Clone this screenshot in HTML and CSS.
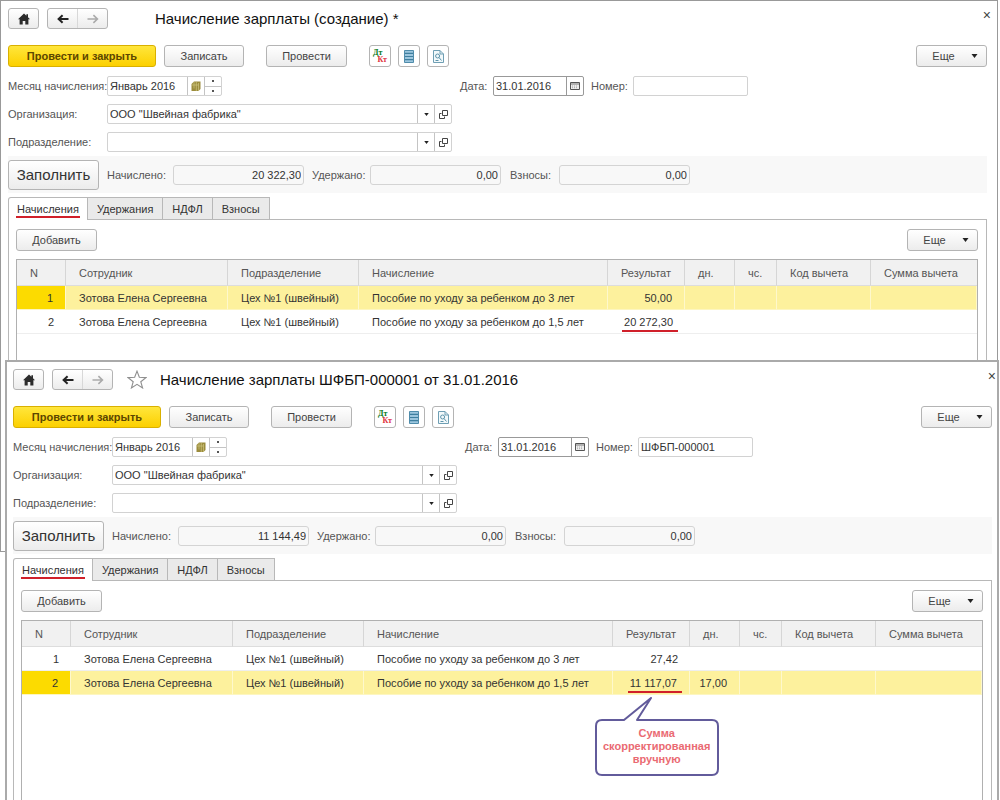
FILE: index.html
```html
<!DOCTYPE html>
<html lang="ru">
<head>
<meta charset="utf-8">
<title>Начисление зарплаты</title>
<link rel="stylesheet" href="styles.css">
</head>
<body>
<svg class="sprite" aria-hidden="true">
  <symbol id="i-home" viewBox="0 0 14 12"><path d="M7 0.5 1 6.2h1.6V11.5h3.1V8h2.6v3.5h3.1V6.2H13L11 4.3V1.2H9.4v1.6z" fill="#2b2b2b"/></symbol>
  <symbol id="i-back" viewBox="0 0 12 10"><path d="M11.5 5H2M5.6 1.2 1.6 5l4 3.8" fill="none" stroke="currentColor" stroke-width="2"/></symbol>
  <symbol id="i-fwd" viewBox="0 0 12 10"><path d="M0.5 5H10M6.4 1.2l4 3.8-4 3.8" fill="none" stroke="currentColor" stroke-width="1.6"/></symbol>
  <symbol id="i-star" viewBox="0 0 18 17"><path d="M9 1l2.1 5.5 5.9.3-4.6 3.7 1.6 5.6L9 12.9l-5 3.2 1.6-5.6L1 6.8l5.9-.3z" fill="#fff" stroke="#8f8f8f"/></symbol>
  <symbol id="i-list" viewBox="0 0 10 13"><path d="M0.5 0.5h9v12h-9z" fill="#9cc6de" stroke="#4f8cab"/><path d="M1 3.3h8M1 6.5h8M1 9.7h8" stroke="#3f7f9f" stroke-width="1.2"/></symbol>
  <symbol id="i-doc" viewBox="0 0 11 13"><path d="M0.5 0.5h6.500l3.500 3.500v8.500h-10z" fill="#f2f9fb" stroke="#6f9fb4"/><path d="M7 0.500V4h3.500" fill="none" stroke="#6f9fb4"/><circle cx="4.600" cy="6" r="2" fill="none" stroke="#5c93aa"/><path d="M6 7.500l2.500 3M2.500 10.500h3" stroke="#5c93aa"/></symbol>
  <symbol id="i-month" viewBox="0 0 10 11"><path d="M3 0.500h6.500v7.500L7.500 10H0.500V3z" fill="#9b8c3c"/><path d="M3 1v6.500M5.300 1v9M7.500 2v8M1 4h6.500" stroke="#cfc583" stroke-width=".7"/></symbol>
  <symbol id="i-cal" viewBox="0 0 10 8"><path d="M0.500 0.500h9v7h-9z" fill="#eee" stroke="#555"/><path d="M1 2h8" stroke="#777"/><path d="M2 4h6M2 5.700h6" stroke="#aaa" stroke-dasharray="1 1"/></symbol>
  <symbol id="i-open" viewBox="0 0 9 9"><path d="M3.500 0.500h5v5h-5z" fill="none" stroke="#444"/><path d="M2.500 3.500h-2v5h5v-2" fill="none" stroke="#444"/></symbol>
  <symbol id="i-down" viewBox="0 0 6 4"><path d="M0 0h6L3 4z" fill="#222"/></symbol>
</svg>

<main class="desktop">
  <section class="window window-new" aria-label="Начисление зарплаты (создание)">
    <header class="titlebar">
      <button class="btn home" aria-label="Домой"><svg width="14" height="12"><use href="#i-home"/></svg></button>
      <div class="nav">
        <button aria-label="Назад"><svg width="12" height="10"><use href="#i-back"/></svg></button>
        <button class="dim" aria-label="Вперед"><svg width="12" height="10"><use href="#i-fwd"/></svg></button>
      </div>
      <div class="favorite"></div>
      <h1>Начисление зарплаты (создание) *</h1>
      <button class="close" aria-label="Закрыть">×</button>
    </header>
    <div class="body">
      <div class="toolbar">
        <button class="btn primary">Провести и закрыть</button>
        <button class="btn write">Записать</button>
        <button class="btn post">Провести</button>
        <div class="icons">
          <button class="btn icon dtkt" aria-label="Дт Кт"><span class="dt">Дт</span><span class="kt">Кт</span></button>
          <button class="btn icon" aria-label="Список"><svg width="10" height="13"><use href="#i-list"/></svg></button>
          <button class="btn icon" aria-label="Отчет"><svg width="11" height="13"><use href="#i-doc"/></svg></button>
        </div>
        <button class="btn more">Еще<svg width="7" height="4"><use href="#i-down"/></svg></button>
      </div>
      <div class="form">
        <div class="row">
          <label class="name" for="month1">Месяц начисления:</label>
          <div class="slot">
            <div class="combo month"><input id="month1" value="Январь 2016"><button aria-label="Выбрать месяц"><svg width="10" height="11"><use href="#i-month"/></svg></button><div class="spin"><button aria-label="Больше"></button><button aria-label="Меньше"></button></div></div>
          </div>
          <label class="date-name" for="date1">Дата:</label>
          <div class="combo date"><input id="date1" value="31.01.2016"><button aria-label="Календарь"><svg width="10" height="8"><use href="#i-cal"/></svg></button></div>
          <label class="num-name" for="num1">Номер:</label>
          <div class="combo num"><input id="num1" value=""></div>
        </div>
        <div class="row">
          <label class="name" for="org1">Организация:</label>
          <div class="slot combo"><input id="org1" value="ООО &quot;Швейная фабрика&quot;"><button aria-label="Список"><svg width="5" height="3"><use href="#i-down"/></svg></button><button aria-label="Открыть"><svg width="9" height="9"><use href="#i-open"/></svg></button></div>
        </div>
        <div class="row">
          <label class="name" for="dep1">Подразделение:</label>
          <div class="slot combo"><input id="dep1" value=""><button aria-label="Список"><svg width="5" height="3"><use href="#i-down"/></svg></button><button aria-label="Открыть"><svg width="9" height="9"><use href="#i-open"/></svg></button></div>
        </div>
      </div>
      <div class="totals">
        <button class="btn fill">Заполнить</button>
        <label class="t1" for="acc1">Начислено:</label><input id="acc1" value="20 322,30" readonly>
        <label class="t2" for="ded1">Удержано:</label><input id="ded1" value="0,00" readonly>
        <label class="t3" for="con1">Взносы:</label><input id="con1" value="0,00" readonly>
      </div>
      <div class="tabs" role="tablist">
        <button class="tab active" role="tab" aria-selected="true">Начисления</button>
        <button class="tab" role="tab">Удержания</button>
        <button class="tab" role="tab">НДФЛ</button>
        <button class="tab" role="tab">Взносы</button>
      </div>
      <div class="panel">
        <div class="panel-bar"><button class="btn add">Добавить</button><button class="btn more">Еще<svg width="7" height="4"><use href="#i-down"/></svg></button></div>
        <div class="grid">
          <table>
            <colgroup><col class="c-n"><col class="c-emp"><col class="c-dep"><col class="c-acc"><col class="c-res"><col class="c-days"><col class="c-hrs"><col class="c-code"><col></colgroup>
            <thead><tr><th>N</th><th>Сотрудник</th><th>Подразделение</th><th>Начисление</th><th>Результат</th><th>дн.</th><th>чс.</th><th>Код вычета</th><th>Сумма вычета</th></tr></thead>
            <tbody>
              <tr class="selected"><td class="r">1</td><td>Зотова Елена Сергеевна</td><td>Цех №1 (швейный)</td><td>Пособие по уходу за ребенком до 3 лет</td><td class="r">50,00</td><td></td><td></td><td></td><td></td></tr>
              <tr><td class="r">2</td><td>Зотова Елена Сергеевна</td><td>Цех №1 (швейный)</td><td>Пособие по уходу за ребенком до 1,5 лет</td><td class="r"><span class="mark">20 272,30</span></td><td></td><td></td><td></td><td></td></tr>
            </tbody>
          </table>
        </div>
      </div>
    </div>
  </section>

  <section class="window window-saved" aria-label="Начисление зарплаты ШФБП-000001">
    <header class="titlebar">
      <button class="btn home" aria-label="Домой"><svg width="14" height="12"><use href="#i-home"/></svg></button>
      <div class="nav">
        <button aria-label="Назад"><svg width="12" height="10"><use href="#i-back"/></svg></button>
        <button class="dim" aria-label="Вперед"><svg width="12" height="10"><use href="#i-fwd"/></svg></button>
      </div>
      <div class="favorite"><button aria-label="В избранное"><svg width="20" height="19"><use href="#i-star"/></svg></button></div>
      <h1>Начисление зарплаты ШФБП-000001 от 31.01.2016</h1>
      <button class="close" aria-label="Закрыть">×</button>
    </header>
    <div class="body">
      <div class="toolbar">
        <button class="btn primary">Провести и закрыть</button>
        <button class="btn write">Записать</button>
        <button class="btn post">Провести</button>
        <div class="icons">
          <button class="btn icon dtkt" aria-label="Дт Кт"><span class="dt">Дт</span><span class="kt">Кт</span></button>
          <button class="btn icon" aria-label="Список"><svg width="10" height="13"><use href="#i-list"/></svg></button>
          <button class="btn icon" aria-label="Отчет"><svg width="11" height="13"><use href="#i-doc"/></svg></button>
        </div>
        <button class="btn more">Еще<svg width="7" height="4"><use href="#i-down"/></svg></button>
      </div>
      <div class="form">
        <div class="row">
          <label class="name" for="month2">Месяц начисления:</label>
          <div class="slot">
            <div class="combo month"><input id="month2" value="Январь 2016"><button aria-label="Выбрать месяц"><svg width="10" height="11"><use href="#i-month"/></svg></button><div class="spin"><button aria-label="Больше"></button><button aria-label="Меньше"></button></div></div>
          </div>
          <label class="date-name" for="date2">Дата:</label>
          <div class="combo date"><input id="date2" value="31.01.2016"><button aria-label="Календарь"><svg width="10" height="8"><use href="#i-cal"/></svg></button></div>
          <label class="num-name" for="num2">Номер:</label>
          <div class="combo num"><input id="num2" value="ШФБП-000001"></div>
        </div>
        <div class="row">
          <label class="name" for="org2">Организация:</label>
          <div class="slot combo"><input id="org2" value="ООО &quot;Швейная фабрика&quot;"><button aria-label="Список"><svg width="5" height="3"><use href="#i-down"/></svg></button><button aria-label="Открыть"><svg width="9" height="9"><use href="#i-open"/></svg></button></div>
        </div>
        <div class="row">
          <label class="name" for="dep2">Подразделение:</label>
          <div class="slot combo"><input id="dep2" value=""><button aria-label="Список"><svg width="5" height="3"><use href="#i-down"/></svg></button><button aria-label="Открыть"><svg width="9" height="9"><use href="#i-open"/></svg></button></div>
        </div>
      </div>
      <div class="totals">
        <button class="btn fill">Заполнить</button>
        <label class="t1" for="acc2">Начислено:</label><input id="acc2" value="11 144,49" readonly>
        <label class="t2" for="ded2">Удержано:</label><input id="ded2" value="0,00" readonly>
        <label class="t3" for="con2">Взносы:</label><input id="con2" value="0,00" readonly>
      </div>
      <div class="tabs" role="tablist">
        <button class="tab active" role="tab" aria-selected="true">Начисления</button>
        <button class="tab" role="tab">Удержания</button>
        <button class="tab" role="tab">НДФЛ</button>
        <button class="tab" role="tab">Взносы</button>
      </div>
      <div class="panel">
        <div class="panel-bar"><button class="btn add">Добавить</button><button class="btn more">Еще<svg width="7" height="4"><use href="#i-down"/></svg></button></div>
        <div class="grid">
          <table>
            <colgroup><col class="c-n"><col class="c-emp"><col class="c-dep"><col class="c-acc"><col class="c-res"><col class="c-days"><col class="c-hrs"><col class="c-code"><col></colgroup>
            <thead><tr><th>N</th><th>Сотрудник</th><th>Подразделение</th><th>Начисление</th><th>Результат</th><th>дн.</th><th>чс.</th><th>Код вычета</th><th>Сумма вычета</th></tr></thead>
            <tbody>
              <tr><td class="r">1</td><td>Зотова Елена Сергеевна</td><td>Цех №1 (швейный)</td><td>Пособие по уходу за ребенком до 3 лет</td><td class="r">27,42</td><td></td><td></td><td></td><td></td></tr>
              <tr class="selected"><td class="r">2</td><td>Зотова Елена Сергеевна</td><td>Цех №1 (швейный)</td><td>Пособие по уходу за ребенком до 1,5 лет</td><td class="r"><span class="mark">11 117,07<span class="callout"><svg viewBox="0 0 124 80" width="124" height="80"><path d="M7 23H29L56 1 42 23H117q6 0 6 6V72q0 6-6 6H7q-6 0-6-6V29q0-6 6-6z" fill="#fff" stroke="#625b9b" stroke-width="2" stroke-linejoin="round"/></svg><span class="callout-text">Сумма скорректированная вручную</span></span></span></td><td class="r">17,00</td><td></td><td></td><td></td></tr>
            </tbody>
          </table>
        </div>
      </div>
    </div>
  </section>
</main>
</body>
</html>
```
FILE: styles.css
```css
* { box-sizing: border-box; }
body {
  margin: 0;
  background: #fff;
  color: #444;
  font: 11px/16px "Liberation Sans", Arial, sans-serif;
}
button, input { font: inherit; color: inherit; margin: 0; padding: 0; border: 0; background: none; }
svg { display: block; flex: none; }
.sprite { position: absolute; width: 0; height: 0; }

.desktop { position: relative; height: 100vh; overflow: hidden; }
.window {
  position: absolute;
  display: flex;
  flex-direction: column;
  background: #fff;
  border: 1px solid #999;
}
.window-new { left: 0; right: 2px; top: 0; bottom: 31%; padding: 7px 10px 0 7px; }
.window-saved { left: 5px; right: 1px; top: 360px; bottom: 0; padding: 7px 5px 0 6px; border: 2px solid #aaa; border-bottom: 0; }

.btn {
  display: flex;
  align-items: center;
  justify-content: center;
  height: 22px;
  border: 1px solid #b4b4b4;
  border-radius: 3px;
  background: linear-gradient(#fff, #ececec);
  white-space: nowrap;
}

.titlebar { display: flex; align-items: center; height: 21px; }
.home { width: 31px; height: 21px; }
.nav {
  display: flex;
  width: 61px;
  height: 21px;
  margin-left: 8px;
  border: 1px solid #b4b4b4;
  border-radius: 3px;
  background: linear-gradient(#fff, #ececec);
}
.nav button { flex: 1; display: flex; align-items: center; justify-content: center; color: #222; }
.nav .dim { color: #aaa; border-left: 1px solid #d8d8d8; }
.favorite { width: 47px; display: flex; justify-content: center; }
h1 { flex: 1; margin: 0; font-size: 15px; line-height: 20px; font-weight: 400; color: #111; }
.close { align-self: flex-start; height: 14px; margin-right: -4px; font-size: 14px; line-height: 14px; color: #444; }

.body { flex: 1; display: flex; flex-direction: column; min-height: 0; padding-top: 16px; }
.toolbar { display: flex; }
.primary { width: 148px; border-color: #d9b000; background: linear-gradient(#ffe63c, #fcd000); font-weight: 700; color: #5c4600; }
.write { width: 80px; margin-left: 8px; }
.post { width: 81px; margin-left: 22px; }
.icons { display: flex; gap: 7px; margin-left: 22px; }
.icon { width: 22px; background: #fff; }
.dtkt { flex-direction: column; font: 700 8px/7px "Liberation Serif", serif; }
.dt { color: #087a1c; align-self: flex-start; padding-left: 3px; }
.kt { color: #e0303c; align-self: flex-end; padding-right: 3px; }
.more { width: 71px; margin-left: auto; gap: 16px; padding-left: 7px; }

.form { display: flex; flex-direction: column; gap: 8px; padding-top: 9px; }
.row { display: flex; align-items: center; }
.row label { color: #555; white-space: nowrap; }
.name { width: 99px; }
.slot { width: 345px; }
.combo { display: flex; height: 20px; border: 1px solid #d2d2d2; border-radius: 2px; background: #fff; }
.combo input { flex: 1; min-width: 0; padding-left: 2px; color: #333; }
.combo > button { width: 17px; display: flex; align-items: center; justify-content: center; border-left: 1px solid #c4c4c4; }
.month { width: 115px; }
.spin { width: 17px; display: flex; flex-direction: column; border-left: 1px solid #c4c4c4; }
.spin button { flex: 1; display: flex; align-items: center; justify-content: center; }
.spin button + button { border-top: 1px solid #c4c4c4; }
.spin button::before { content: ""; width: 2px; height: 2px; background: #555; }
.date-name { margin-left: 8px; width: 33px; }
.date { width: 91px; border-color: #999; }
.date > button { border-color: #999; }
.num-name { margin-left: 7px; width: 42px; }
.num { width: 115px; }

.totals { display: flex; align-items: center; margin-top: 4px; height: 37px; background: #f8f8f8; }
.totals .fill { width: 91px; height: 30px; font-size: 15px; color: #333; }
.totals label { color: #555; white-space: nowrap; }
.totals input { width: 131px; height: 20px; padding-right: 2px; border: 1px solid #d4d4d4; border-radius: 3px; text-align: right; color: #333; }
.t1 { margin-left: 8px; width: 66px; }
.t2 { margin-left: 8px; width: 58px; }
.t3 { margin-left: 9px; width: 49px; }

.tabs { display: flex; margin-top: 4px; height: 22px; position: relative; }
.tab { padding: 0 9px; border: 1px solid #b8b8b8; border-left: 0; border-bottom: 0; background: #eaeaea; color: #333; }
.tab.active {
  position: relative;
  padding: 0 8px;
  border-left: 1px solid #b8b8b8;
  border-radius: 3px 0 0 0;
  margin-bottom: -1px;
  background: #fff;
}
.tab.active::after { content: ""; position: absolute; left: 7px; right: 7px; bottom: 2px; height: 2px; background: #d0202a; }

.panel { flex: 1; min-height: 0; display: flex; flex-direction: column; padding: 9px 8px 0 7px; border: 1px solid #b8b8b8; border-bottom: 0; }
.panel-bar { display: flex; }
.add { width: 81px; }
.grid { flex: 1; min-height: 0; margin-top: 8px; border: 1px solid #b0b0b0; border-bottom: 0; }

table { width: 100%; table-layout: fixed; border-collapse: separate; border-spacing: 0; }
.c-n { width: 49px; }
.c-emp { width: 162px; }
.c-dep { width: 131px; }
.c-acc { width: 249px; }
.c-res { width: 77px; }
.c-days { width: 50px; }
.c-hrs { width: 42px; }
.c-code { width: 94px; }
th, td { padding: 0 0 0 13px; text-align: left; white-space: nowrap; font-weight: 400; }
th { height: 26px; background: #f1f1f1; color: #555; border-right: 1px solid #d6d6d6; border-bottom: 1px solid #ddd; }
th:last-child { border-right: 0; }
td { height: 24px; color: #333; border-bottom: 1px solid #eee; }
td.r { text-align: right; padding: 0 12px 0 0; }
.selected td { background: #fdf19d; border-right: 1px solid #fef8cc; border-bottom-color: #fdf6c0; }
.selected td:first-child { background: #fcdb00; }

.mark { position: relative; display: inline-block; }
.mark::after { content: ""; position: absolute; left: -2px; right: -5px; bottom: -2px; height: 2px; background: #d0202a; }
.callout { position: absolute; left: -35px; top: 22px; width: 124px; }
.callout-text {
  position: absolute;
  left: 0;
  right: 0;
  top: 30px;
  font-weight: 700;
  line-height: 13px;
  text-align: center;
  white-space: normal;
  color: #ea6a72;
}
```
